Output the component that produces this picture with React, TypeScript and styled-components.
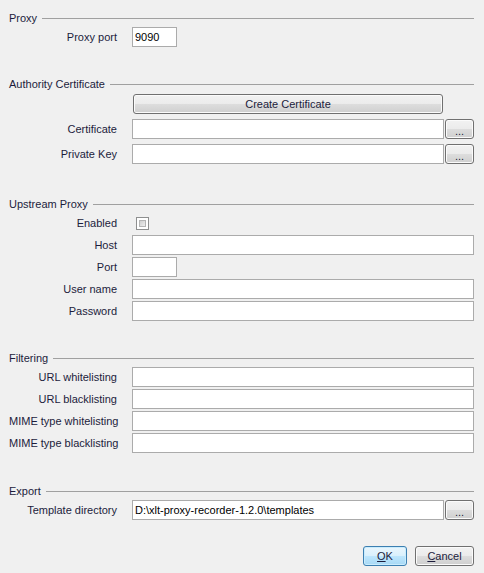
import * as React from 'react';
import styled, { createGlobalStyle } from 'styled-components';

const GlobalStyle = createGlobalStyle`
  html, body {
    margin: 0;
    padding: 0;
    background: #f0f0f0;
  }
  body {
    font-family: 'Liberation Sans', Tahoma, Arial, sans-serif;
    font-size: 11px;
    color: #1c1c3c;
  }
`;

const Page = styled.div`
  width: 484px;
  height: 573px;
  box-sizing: border-box;
  padding: 10px 10px 0 9px;
  background: #f0f0f0;
  display: flex;
  flex-direction: column;
`;

const Section = styled.section<{ $top: number }>`
  margin-top: ${(p) => p.$top}px;
`;

const SectionHeader = styled.div`
  display: flex;
  align-items: center;
  height: 16px;
  margin-bottom: 1px;
`;

const HeaderTitle = styled.span`
  line-height: 16px;
  white-space: nowrap;
`;

const HeaderRule = styled.div`
  flex: 1;
  height: 1px;
  margin-left: 5px;
  background: #a0a0a0;
`;

const FormGrid = styled.div<{ $rowGap: number; $padTop?: number }>`
  display: grid;
  grid-template-columns: 108px 1fr;
  column-gap: 15px;
  row-gap: ${(p) => p.$rowGap}px;
  padding-top: ${(p) => p.$padTop ?? 0}px;
  align-items: center;
`;

const Label = styled.label`
  text-align: right;
  white-space: nowrap;
  line-height: 20px;
`;

const TextField = styled.input<{ $width?: number }>`
  box-sizing: border-box;
  width: ${(p) => (p.$width ? `${p.$width}px` : '100%')};
  height: 20px;
  margin: 0;
  padding: 0 2px;
  border: 1px solid #ababab;
  background: #fff;
  font-family: inherit;
  font-size: 11px;
  color: #000;
  outline: none;
`;

const FieldWithButton = styled.div`
  display: grid;
  grid-template-columns: 1fr 29px;
  column-gap: 1px;
  align-items: center;
`;

const buttonFace = `
  box-sizing: border-box;
  height: 20px;
  margin: 0;
  padding: 0;
  border: 1px solid #707070;
  border-radius: 3px;
  background: linear-gradient(#f2f2f2 0%, #ebebeb 50%, #dddddd 50%, #cfcfcf 100%);
  box-shadow: inset 0 0 0 1px #fbfbfb;
  font-family: inherit;
  font-size: 11px;
  color: #1c1c3c;
  cursor: pointer;
`;

const WideButton = styled.button`
  ${buttonFace}
  width: 310px;
  margin-left: 1px;
`;

const BrowseButton = styled.button`
  ${buttonFace}
  width: 29px;
  line-height: 14px;
  padding-top: 4px;
  letter-spacing: 0px;
`;

const Checkbox = styled.span`
  display: block;
  box-sizing: border-box;
  width: 13px;
  height: 13px;
  margin-left: 4px;
  border: 1px solid #8e8f8f;
  background: #fff;
  padding: 2px;
  &::after {
    content: '';
    display: block;
    width: 100%;
    height: 100%;
    box-sizing: border-box;
    border: 1px solid #b4b4b4;
    background: linear-gradient(135deg, #cfcfcf 0%, #eeeeee 100%);
  }
`;

const Footer = styled.div`
  display: flex;
  justify-content: flex-end;
  gap: 8px;
  margin-top: 26px;
`;

const DialogButton = styled.button<{ $default?: boolean; $width: number }>`
  ${buttonFace}
  width: ${(p) => p.$width}px;
  ${(p) =>
    p.$default
      ? `
    border-color: #3c7fb1;
    background: linear-gradient(#eaf6fd 0%, #d9f0fc 50%, #bee6fd 50%, #a7d9f5 100%);
    box-shadow: inset 0 0 0 1px #c9ecfd;
  `
      : ''}
  u {
    text-decoration: underline;
    text-underline-offset: 1px;
  }
`;

const Header = ({ title }: { title: string }) => (
  <SectionHeader>
    <HeaderTitle>{title}</HeaderTitle>
    <HeaderRule />
  </SectionHeader>
);

const Browse = ({ label, value }: { label: string; value?: string }) => (
  <>
    <Label>{label}</Label>
    <FieldWithButton>
      <TextField defaultValue={value} />
      <BrowseButton>...</BrowseButton>
    </FieldWithButton>
  </>
);

export default function App() {
  return (
    <>
      <GlobalStyle />
      <Page>
        <Section $top={0}>
          <Header title="Proxy" />
          <FormGrid $rowGap={2}>
            <Label>Proxy port</Label>
            <TextField $width={45} defaultValue="9090" />
          </FormGrid>
        </Section>

        <Section $top={29}>
          <Header title="Authority Certificate" />
          <FormGrid $rowGap={5} $padTop={1}>
            <span />
            <WideButton>Create Certificate</WideButton>
            <Browse label="Certificate" />
            <Browse label="Private Key" />
          </FormGrid>
        </Section>

        <Section $top={32}>
          <Header title="Upstream Proxy" />
          <FormGrid $rowGap={2}>
            <Label>Enabled</Label>
            <Checkbox />
            <Label>Host</Label>
            <TextField />
            <Label>Port</Label>
            <TextField $width={45} />
            <Label>User name</Label>
            <TextField />
            <Label>Password</Label>
            <TextField type="password" />
          </FormGrid>
        </Section>

        <Section $top={29}>
          <Header title="Filtering" />
          <FormGrid $rowGap={2}>
            <Label>URL whitelisting</Label>
            <TextField />
            <Label>URL blacklisting</Label>
            <TextField />
            <Label>MIME type whitelisting</Label>
            <TextField />
            <Label>MIME type blacklisting</Label>
            <TextField />
          </FormGrid>
        </Section>

        <Section $top={30}>
          <Header title="Export" />
          <FormGrid $rowGap={2}>
            <Browse label="Template directory" value="D:\xlt-proxy-recorder-1.2.0\templates" />
          </FormGrid>
        </Section>

        <Footer>
          <DialogButton $default $width={44}>
            <u>O</u>K
          </DialogButton>
          <DialogButton $width={59}>
            <u>C</u>ancel
          </DialogButton>
        </Footer>
      </Page>
    </>
  );
}
